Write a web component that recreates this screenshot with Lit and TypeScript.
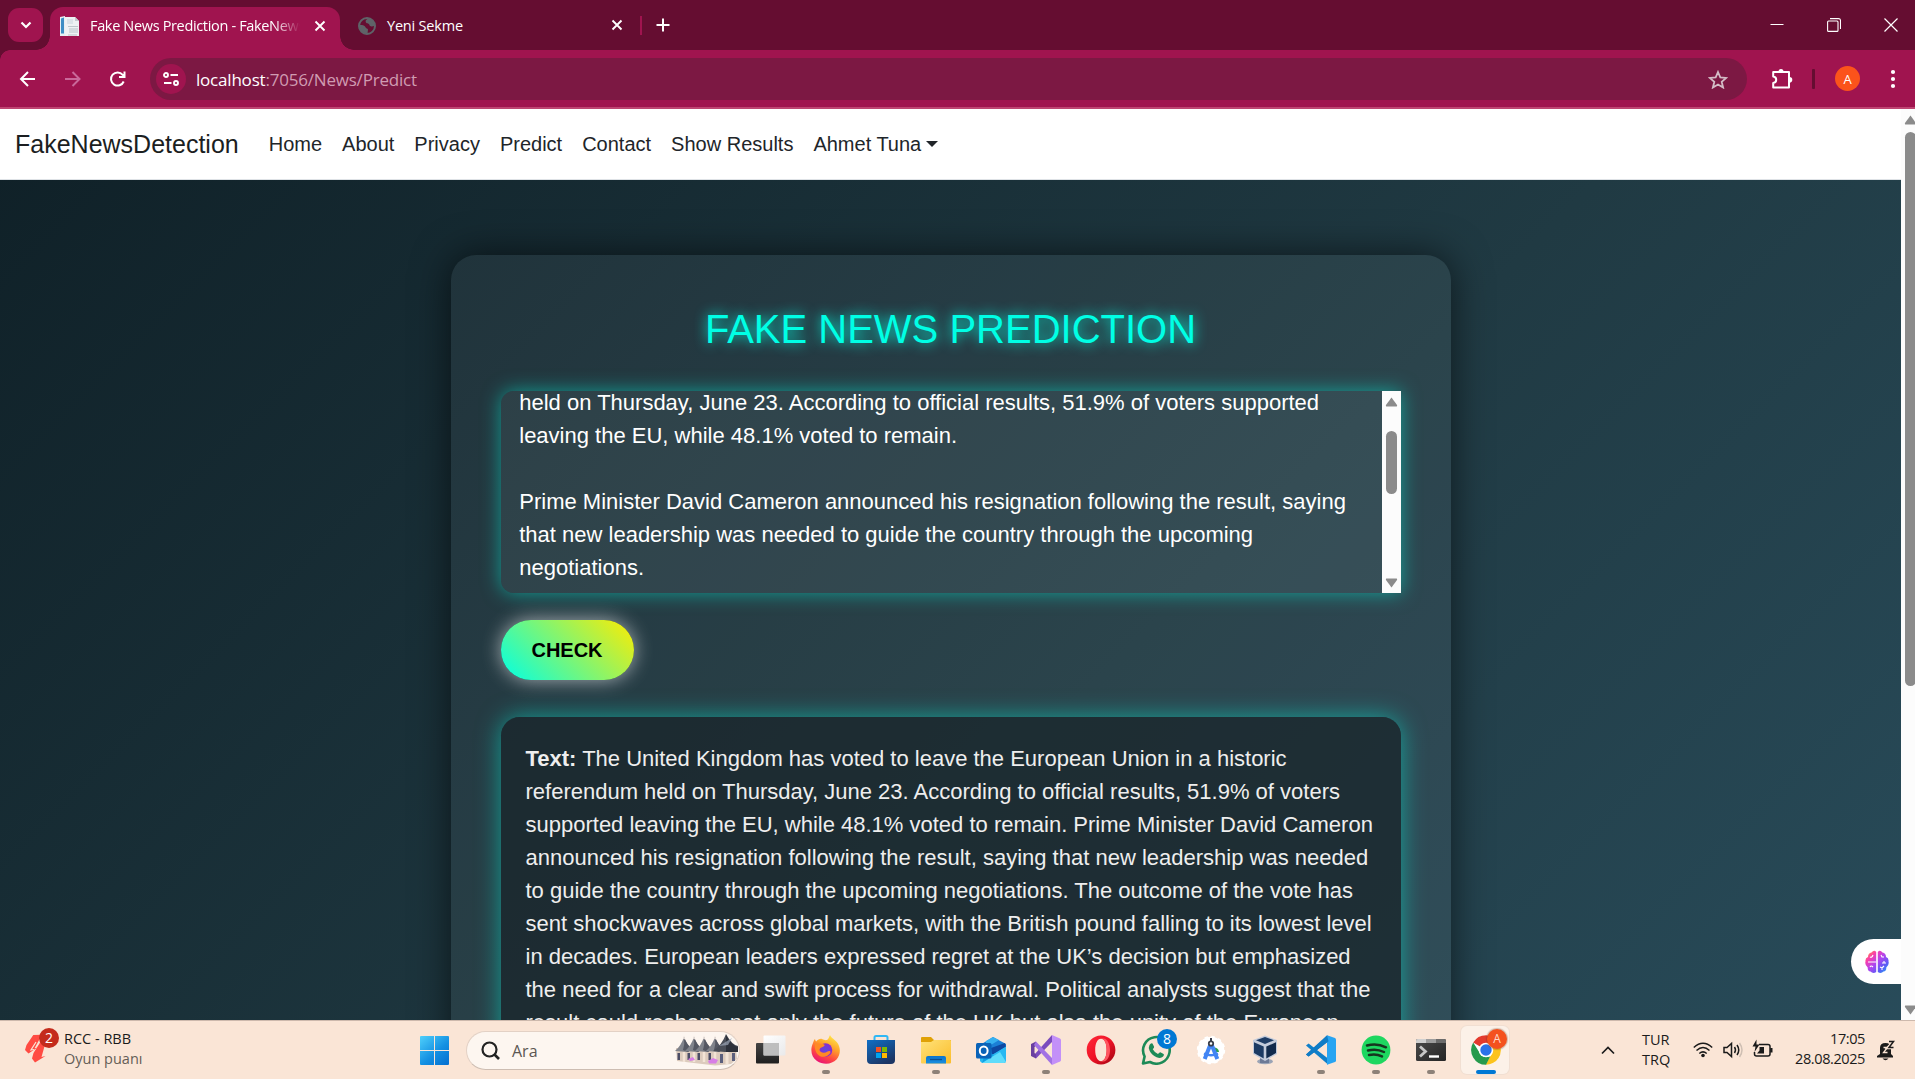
import { LitElement, html, css, svg, nothing } from "lit";
import { customElement, property } from "lit/decorators.js";

const icons: Record<string, unknown> = {
  taskview: svg`
    <defs>
      <linearGradient id="tvd" x1="0" y1="0" x2="0" y2="1"><stop offset="0" stop-color="#444"/><stop offset="1" stop-color="#1f1f1f"/></linearGradient>
      <linearGradient id="tvl" x1="0" y1="0" x2="1" y2="1"><stop offset="0" stop-color="#fff"/><stop offset="1" stop-color="#e9e9ea"/></linearGradient>
    </defs>
    <rect x="0" y="8" width="23" height="20.5" rx="1" fill="url(#tvd)"/>
    <rect x="7.500" y="0.500" width="22" height="20" rx="1" fill="url(#tvl)"/>
    <path d="M7.500 8H23V20.500H7.500z" fill="#b0b0b0" opacity=".8"/>`,
  firefox: svg`
    <defs>
      <linearGradient id="ffa" x1=".8" y1="0" x2=".3" y2="1"><stop offset="0" stop-color="#fff04a"/><stop offset=".4" stop-color="#ffa02a"/><stop offset=".7" stop-color="#ff4a40"/><stop offset="1" stop-color="#e8107a"/></linearGradient>
      <radialGradient id="ffb"><stop offset="0" stop-color="#5b4be0"/><stop offset="1" stop-color="#8a2bd0"/></radialGradient>
    </defs>
    <path d="M19 0c1 3 5 4.500 7.500 8 3.500 5 3 12-1 16.500C21 29.500 12 30 6 26 0 22-1 14 2 8c.5-1.500 1-3 2-4 .3 1 .5 2 1.200 2.600C7 4.500 9 3.500 11 4c2 .6 3 1.500 5 1 1.500-.8 2-3 3-5z" fill="url(#ffa)"/>
    <circle cx="14.500" cy="15" r="6.800" fill="url(#ffb)"/>
    <path d="M4 9c3-1 5 0 8 0 2 .2 2 1.800.5 2.600-2 1-4 1.400-4 3.400 1 3 5 3.500 8 1.500 1.500-1 3-.5 3 .7-1 3-5 5.300-9 4.500C6 20.500 3 15 4 9z" fill="#ff8a24"/>`,
  store: svg`
    <defs><linearGradient id="sta" x1="0" y1="0" x2=".6" y2="1"><stop offset="0" stop-color="#0f6fc6"/><stop offset="1" stop-color="#1c3564"/></linearGradient></defs>
    <path d="M8.500 6V2.500Q8.500 1 10 1h10q1.500 0 1.500 1.500V6" fill="none" stroke="#30b8f5" stroke-width="2"/>
    <path d="M1 5h28v20q0 4-4 4H5q-4 0-4-4z" fill="url(#sta)"/>
    <path d="M10 12h5v5h-5z" fill="#f25022"/><path d="M16 12h5v5h-5z" fill="#7fba00"/>
    <path d="M10 18h5v5h-5z" fill="#00a4ef"/><path d="M16 18h5v5h-5z" fill="#ffb900"/>`,
  folder: svg`
    <defs><linearGradient id="foa" x1="0" y1="0" x2="1" y2="1"><stop offset="0" stop-color="#ffe27a"/><stop offset="1" stop-color="#fbbd2b"/></linearGradient>
    <linearGradient id="fob" x1="0" y1="0" x2="0" y2="1"><stop offset="0" stop-color="#0b74cc"/><stop offset="1" stop-color="#1b8fe0"/></linearGradient></defs>
    <path d="M0 3q0-1 1-1h9l3 3h17v5H0z" fill="#e0a106"/>
    <path d="M0 7h10l3-2h16q1 0 1 1v21.500q0 1-1 1H1q-1 0-1-1z" fill="url(#foa)"/>
    <path d="M5 28.500V23q0-2 2-2h16q2 0 2 2v5.500z" fill="url(#fob)"/>
    <path d="M9 24.500h12" stroke="#0b4f92" stroke-width="1.300"/>`,
  outlook: svg`
    <path d="M4 10 17 2l13 7v3L17 20 4 14z" fill="#1b7fd6"/>
    <path d="M10 6 17 2l6 3-13 8z" fill="#36b0f0"/>
    <path d="M15 13 29 8l1 4-14 8z" fill="#0d47a1"/>
    <path d="M4 14 16 20 30 11.500V26q0 2-2 2H7q-2 0-3-2z" fill="#28b8f2"/>
    <path d="M6 28 24 17l6 10-2 1z" fill="#5fdcfb"/>
    <path d="M6 28 18 20l-8-4z" fill="#0fa0e4"/>
    <rect x="0" y="8" width="15.500" height="15.500" rx="1.500" fill="#0a63b8"/>
    <ellipse cx="7.700" cy="15.700" rx="3.900" ry="4.300" fill="none" stroke="#fff" stroke-width="2"/>`,
  vs: svg`
    <path d="M5 23.500 21 7V0L3 20z" fill="#7a4bbd"/>
    <path d="M0 9 5 6.500v4L3.500 12v6L5 19.500v4L0 21z" fill="#6a3fa0"/>
    <path d="M5 6.500 21 23V30L3 10z" fill="#a272e4"/>
    <path d="M21 0l8 3.500q1 .5 1 1.500v20q0 1-1 1.500L21 30z" fill="#c390f8"/>`,
  opera: svg`
    <defs><linearGradient id="opa" x1="0" y1="0" x2="1" y2="1"><stop offset="0" stop-color="#ff2a3a"/><stop offset=".5" stop-color="#ef1226"/><stop offset="1" stop-color="#9c0411"/></linearGradient></defs>
    <path fill-rule="evenodd" d="M15 .5C7 .5.700 7 .700 15S7 29.500 15 29.500 29.400 23 29.400 15 23 .5 15 .5zM15 3.800c3.600 0 5.600 4.800 5.600 11.200S18.600 26.200 15 26.200 9.200 21.400 9.200 15 11.400 3.800 15 3.800z" fill="url(#opa)"/>
    <path d="M15 3.800c3.600 0 5.600 4.800 5.600 11.200S18.600 26.200 15 26.200c6 2 9-5 9-11.200S21 1.800 15 3.800z" fill="#ff5560"/>`,
  whatsapp: svg`
    <path d="M2 28.500 3.600 21.500A13.300 13.300 0 1 1 9 27z" fill="none" stroke="#1d8a57" stroke-width="2.600" stroke-linejoin="round"/>
    <path d="M8.500 10q1.500-2.500 3-1.500l1.600 3.200q.3.700-1.300 2.500 1.800 3.300 5.200 4.800 1.600-2 2.300-1.800l3.300 1.700q1 .8-.5 2.700-2.500 2.400-6.500.6-5-2.500-7-6.500-1.500-3.200-.1-5.700z" fill="#1d8a57"/>`,
  android: svg`
    <circle cx="15" cy="15" r="13.300" fill="#fff"/><circle cx="15" cy="15" r="13.300" fill="none" stroke="#fff" stroke-width="1.800" stroke-dasharray="3.500 3.460"/>
    <path d="M18 12.500q4.500 0 5 4.500h-5z" fill="#2f9e50"/>
    <path d="M15 8 8.700 24M15 8l6.300 16" stroke="#4285f4" stroke-width="4" fill="none"/>
    <path d="M8 18.500q7 3.500 14 0" stroke="#4285f4" stroke-width="2.400" fill="none"/>
    <circle cx="15" cy="8.500" r="2.200" fill="#fff" stroke="#3a3f4b" stroke-width="1.800"/><path d="M15 3v3" stroke="#3a3f4b" stroke-width="2"/>`,
  vbox: svg`
    <ellipse cx="14" cy="26.500" rx="8" ry="2.800" fill="#9aa3b5"/>
    <path d="M9 22h9v6H9z" fill="#6d7a96"/>
    <path d="M2 5 14 .500 26 5V19L14 26 2 19z" fill="#c3cbdb"/>
    <path d="M5 5.300 14 2l9 3.300L14 9z" fill="#1f3d66"/>
    <path d="M3 7.300 12.700 11.500V23.500L3 18z" fill="#1c3a63"/>
    <path d="M25 7.300 15.300 11.500V23.500L25 18z" fill="#122a4c"/>`,
  vscode: svg`
    <path d="M0 10.500 2.600 8.500 22 23.500V29.500z" fill="#0f7fc9"/>
    <path d="M0 19.500 2.600 21.500 22 6.500V.500z" fill="#0a6ab8"/>
    <path d="M21 .3 29 3q1 .5 1 1.500v21q0 1-1 1.500l-8 2.700z" fill="#27a4f2"/>
    <path d="M0 19.500 21 .3l1.500 6L2.600 21.500z" fill="#0f7cc6"/>`,
  spotify: svg`
    <circle cx="15" cy="15" r="14.400" fill="#1ed760"/>
    <path d="M6 10.500q10-2.800 19 1.800M7 15.500q8.500-2.300 16 1.500M8 20q7-1.700 13 1.400" stroke="#16351f" fill="none" stroke-linecap="round" stroke-width="2.500"/>`,
  terminal: svg`
    <defs><linearGradient id="tea" x1="0" y1="0" x2="1" y2="1"><stop offset="0" stop-color="#4a4a4a"/><stop offset="1" stop-color="#252525"/></linearGradient></defs>
    <rect x="0" y="4" width="30" height="22" rx="1.500" fill="url(#tea)"/>
    <path d="M0 8V5.500Q0 4 1.500 4H10v4z" fill="#d0d0d0"/><path d="M10 4h10v4H10z" fill="#9d9d9d"/><path d="M20 4h8.500Q30 4 30 5.500V8H20z" fill="#6b6b6b"/>
    <path d="M4 11.500l5.500 5-5.500 5" stroke="#c7c7c7" stroke-width="2.800" fill="none"/><path d="M13 21.500h10" stroke="#fff" stroke-width="2.400"/>`,
  chrome: svg`
    <circle cx="15" cy="15" r="14.800" fill="#fff"/>
    <path d="M15 15 2.180 7.600A14.800 14.800 0 0 1 27.820 7.600z" fill="#e33b2e"/>
    <path d="M15 8.200H28.200A14.800 14.800 0 0 1 14.500 29.800L20.900 18.400z" fill="#fcc31e"/>
    <path d="M15 29.800A14.800 14.800 0 0 1 2.180 7.600L9.100 18.400Q11 21.800 15 21.800l4.200-.4z" fill="#269a4c"/>
    <circle cx="15" cy="15" r="7.300" fill="#fff"/><circle cx="15" cy="15" r="5.700" fill="#2a72e8"/>`,
};

const apps: { icon: string; run?: boolean; active?: boolean; badge?: string }[] = [
  { icon: "taskview" },
  { icon: "firefox", run: true },
  { icon: "store" },
  { icon: "folder", run: true },
  { icon: "outlook" },
  { icon: "vs", run: true },
  { icon: "opera" },
  { icon: "whatsapp", badge: "8" },
  { icon: "android" },
  { icon: "vbox" },
  { icon: "vscode", run: true },
  { icon: "spotify", run: true },
  { icon: "terminal", run: true },
  { icon: "chrome", active: true, badge: "A" },
];

@customElement("browser-chrome")
export class BrowserChrome extends LitElement {
  static styles = css`
    :host { display: block; height: 109px; background: #a0144f; box-sizing: border-box; border-bottom: 2px solid #be4572; font-family: "Open Sans", "Noto Sans", sans-serif; color: #fff; }
    .strip { display: flex; height: 50px; background: #650d31; align-items: center; padding-left: 8px; box-sizing: border-box; }
    .menu { width: 35px; height: 34px; border-radius: 11px; background: #a0144f; display: grid; place-items: center; margin-right: 7px; }
    .tab { display: flex; align-items: center; height: 43px; align-self: flex-end; font-size: 14.500px; white-space: nowrap; box-sizing: border-box; }
    .active { position: relative; width: 290px; background: #a0144f; border-radius: 13px 13px 0 0; padding: 0 12px 6px 10px; }
    .active::before, .active::after { content: ""; position: absolute; bottom: 0; width: 14px; height: 14px; }
    .active::before { left: -14px; background: radial-gradient(circle at 0 0, transparent 13.500px, #a0144f 14px); }
    .active::after { right: -14px; background: radial-gradient(circle at 100% 0, transparent 13.500px, #a0144f 14px); }
    .label { margin-left: 10px; letter-spacing: -0.340px; }
    .fade { width: 210px; overflow: hidden; -webkit-mask-image: linear-gradient(90deg, #000 184px, transparent 210px); }
    .idle { width: 254px; padding: 0 0 6px 17px; }
    .idle .label { letter-spacing: -0.200px; }
    .close { margin-left: 14px; }
    .shut { margin-left: 17px; }
    .sep { width: 2px; height: 19px; background: #a0144f; margin: 0 14px 0 17px; }
    .win { margin-left: auto; display: flex; align-items: center; gap: 43px; padding-right: 17px; }
    .bar { position: relative; display: flex; align-items: center; height: 57px; box-sizing: border-box; padding: 0 19px; }
    .bar::before { content: ""; position: absolute; left: 0; top: 0; width: 10px; height: 10px; background: radial-gradient(circle at 100% 100%, transparent 9.500px, #650d31 10px); }
    .nav { display: flex; gap: 27px; width: 131px; flex: none; }
    .omni { flex: none; width: 1597px; height: 42px; margin-top: 1px; border-radius: 21px; background: #7c1843; display: flex; align-items: center; padding: 0 19px 0 6px; box-sizing: border-box; }
    .chip { width: 30px; height: 30px; border-radius: 50%; background: #a0144f; display: grid; place-items: center; }
    .url { flex: 1; margin-left: 10px; font-size: 17px; letter-spacing: -0.200px; color: #d09cb2; }
    .url b { font-weight: 400; color: #fff; }
    .right { flex: 1; display: flex; align-items: center; }
    .puzzle { margin-left: 24px; }
    .vr { width: 3px; height: 20px; border-radius: 1px; background: #650d31; margin-left: 18px; }
    .avatar { width: 25px; height: 25px; border-radius: 50%; background: #fb531b; margin-left: 20px; font-size: 13px; display: grid; place-items: center; }
    .dots { margin-left: 30px; }
    svg { display: block; flex: none; }
  `;
  render() {
    const cross = svg`<path d="M1.500 1.500l9 9M10.500 1.500l-9 9"/>`;
    return html`
      <div class="strip">
        <div class="menu"><svg width="12" height="8" viewBox="0 0 12 8" fill="none" stroke="#fff" stroke-width="2.200"><path d="M1.500 1.500 6 6l4.500-4.500"/></svg></div>
        <div class="tab active">
          <svg width="20" height="20" viewBox="0 0 20 20"><path d="M0 1l5-1v20H0z" fill="#e6eef2"/><path d="M1 2.500l3-1v16H1z" fill="#3d8dc4"/><path d="M5 1h10l4 4v15H5z" fill="#eef1f3"/><path d="M7 3h6v5H7z" fill="#dbe3e8"/><path d="M15 1l4 4h-4z" fill="#c3cbd0"/><path d="M9 12h9v5H9z" fill="#d3dade"/><path d="M8 10.500h10M8 19h9" stroke="#bcc5ca"/></svg>
          <span class="label fade">Fake News Prediction - FakeNews</span>
          <svg class="close" width="12" height="12" viewBox="0 0 12 12" stroke="#fff" stroke-width="1.900">${cross}</svg>
        </div>
        <div class="tab idle">
          <svg width="20" height="20" viewBox="0 0 20 20"><circle cx="10" cy="10" r="8" fill="none" stroke="#5f6368" stroke-width="2"/><path d="M3 9c3 0 5 .5 5.500 2.200s2 .8 2.500 2.300L10.500 18C5 18 2 14 2 9zM11.500 2.500C9 3 8 5 9 6.500s3 .5 3.500 2.500 3 1.500 5.500.5C17.500 5 15 3 11.500 2.500z" fill="#5f6368"/></svg>
          <span class="label">Yeni Sekme</span>
        </div>
        <svg class="shut" width="12" height="12" viewBox="0 0 12 12" stroke="#fff" stroke-width="1.900">${cross}</svg>
        <div class="sep"></div>
        <svg width="14" height="14" viewBox="0 0 14 14" stroke="#fff" stroke-width="2"><path d="M7 .5v13M.5 7h13"/></svg>
        <div class="win">
          <svg width="14" height="14" viewBox="0 0 14 14" stroke="#fff"><path d="M.500 6.500h13"/></svg>
          <svg width="14" height="14" viewBox="0 0 14 14" fill="none" stroke="#fff" stroke-width="1.100"><rect x=".6" y="3" width="10.400" height="10.400" rx="1"/><path d="M3 .6h8.500q2 0 2 2v8.400"/></svg>
          <svg width="14" height="14" viewBox="0 0 14 14" stroke="#fff" stroke-width="1.200"><path d="M.5.5l13 13M13.500.5l-13 13"/></svg>
        </div>
      </div>
      <div class="bar">
        <div class="nav">
          <svg width="18" height="18" viewBox="0 0 18 18" fill="none" stroke="#fff" stroke-width="2"><path d="M16 9H2.500M9 2 2 9l7 7"/></svg>
          <svg width="18" height="18" viewBox="0 0 18 18" fill="none" stroke="#c9699a" stroke-width="2"><path d="M1 9h14M8.500 2l7 7-7 7"/></svg>
          <svg width="18" height="18" viewBox="0 0 18 18" fill="none" stroke="#fff" stroke-width="2"><path d="M14.700 11.500A6.600 6.600 0 1 1 13.700 4.800L15.500 6.500M15.500 1.500v5.500h-5.500"/></svg>
        </div>
        <div class="omni">
          <div class="chip"><svg width="16" height="14" viewBox="0 0 16 14" fill="none" stroke="#fff" stroke-width="1.900"><circle cx="3" cy="3" r="2"/><path d="M7.500 3H15M1 11h7.500"/><circle cx="13" cy="11" r="2"/></svg></div>
          <div class="url"><b>localhost</b>:7056/News/Predict</div>
          <svg width="20" height="19" viewBox="0 0 20 19" fill="none" stroke="#d3bcc6" stroke-width="1.800"><path d="M10 2l2.300 5.400 5.900.5-4.500 3.900 1.400 5.700L10 14.500l-5.100 3 1.400-5.700L1.800 7.900l5.900-.5z"/></svg>
        </div>
        <div class="right">
          <svg class="puzzle" width="23" height="22" viewBox="0 0 23 22"><path d="M3 4h15v15.500H2.200v-4.500c4-.4 4-6.100 0-6.500V4z" fill="none" stroke="#fff" stroke-width="2" stroke-linejoin="round"/><path d="M7.500 3.500a2.500 2.500 0 0 1 5 0zM18.500 9a2.800 2.800 0 0 1 0 5.600z" fill="#fff"/></svg>
          <div class="vr"></div>
          <div class="avatar">A</div>
          <svg class="dots" width="6" height="20" viewBox="0 0 6 20" fill="#fff"><circle cx="3" cy="3" r="2.100"/><circle cx="3" cy="10" r="2.100"/><circle cx="3" cy="17" r="2.100"/></svg>
        </div>
      </div>`;
  }
}

@customElement("scroll-track")
export class ScrollTrack extends LitElement {
  @property({ type: Number }) before = 0;
  @property({ type: Number }) thumb = 0;
  static styles = css`
    :host { display: flex; flex-direction: column; width: 19px; align-items: center; background: #fcfcfc; box-sizing: border-box; padding: 6px 0 5px; flex: none; }
    .thumb { width: 11px; border-radius: 6px; background: #8b8b8b; flex: none; }
    .end { margin-top: auto; }
    svg { display: block; flex: none; }
  `;
  render() {
    return html`
      <svg width="13" height="10" viewBox="0 0 13 10"><path d="M6.500.500 12.200 8.300 11.800 9.500H1.200L.8 8.300z" fill="#8b8b8b"/></svg>
      <div class="thumb" style="margin-top:${this.before}px;height:${this.thumb}px"></div>
      <svg class="end" width="13" height="10" viewBox="0 0 13 10"><path d="M6.500 9.500 12.200 1.700 11.800.500H1.200L.8 1.700z" fill="#8b8b8b"/></svg>`;
  }
}

@customElement("news-page")
export class NewsPage extends LitElement {
  static styles = css`
    :host { display: flex; height: 911px; overflow: hidden; position: relative; font-family: "Liberation Sans", Arial, sans-serif; }
    .view { width: 1901px; flex: none; height: 911px; overflow: hidden; }
    .body { height: 1441px; background: linear-gradient(135deg, #0f2027, #203a43, #2c5364); overflow: hidden; }
    nav { height: 71px; box-sizing: border-box; background: #fff; border-bottom: 1px solid #dee2e6; display: flex; align-items: center; padding-left: 15px; color: #212529; font-size: 20px; gap: 20px; }
    .brand { font-size: 25px; margin-right: 10px; color: #1b1e21; line-height: 30px; }
    .drop { display: flex; align-items: center; gap: 5px; }
    .caret { border: 6px solid transparent; border-top-color: #212529; border-bottom: 0; }
    .card { width: 1000px; box-sizing: border-box; margin: 75px auto 0; padding: 50px; border-radius: 25px; background: rgba(255,255,255,.05); box-shadow: 0 0 38px rgba(0,0,0,.6); height: 1150px; }
    h1 { margin: 0 0 38px; font-size: 40px; line-height: 48px; font-weight: 400; text-align: center; color: #00ffe5; text-shadow: 0 0 12.500px #00ffe5; }
    .area { height: 202px; display: flex; justify-content: space-between; overflow: hidden; border-radius: 12.500px 0 0 12.500px; background: rgba(255,255,255,.05); box-shadow: 0 0 19px rgba(0,255,229,.5); color: #fff; font-size: 22px; line-height: 33px; }
    .typed { margin: -5px 0 0 18.750px; white-space: pre; }
    button { display: block; margin: 27px 0 37px; width: 133px; height: 60px; border: 0; border-radius: 30px; padding: 0; font: 700 20px "Liberation Sans", Arial, sans-serif; color: #000; background: linear-gradient(45deg, #00ffe5, #ffeb00); box-shadow: 0 0 19px rgba(255,255,255,.6); }
    .result { padding: 25px; height: 420px; border-radius: 18.750px; box-shadow: 0 0 25px rgba(0,255,229,.5); background: rgba(25,38,43,.75); color: #eee; font-size: 22px; line-height: 33px; white-space: pre; }
    .fab { position: absolute; left: 1851px; top: 830px; width: 50px; height: 45px; box-sizing: border-box; background: #fff; border-radius: 23px 0 0 23px; display: flex; align-items: center; padding-left: 14px; }
  `;
  render() {
    const links = ["Home", "About", "Privacy", "Predict", "Contact", "Show Results"];
    const typed = [
      "held on Thursday, June 23. According to official results, 51.9% of voters supported",
      "leaving the EU, while 48.1% voted to remain.",
      "",
      "Prime Minister David Cameron announced his resignation following the result, saying",
      "that new leadership was needed to guide the country through the upcoming",
      "negotiations.",
    ].join("\n");
    const body = [
      " The United Kingdom has voted to leave the European Union in a historic",
      "referendum held on Thursday, June 23. According to official results, 51.9% of voters",
      "supported leaving the EU, while 48.1% voted to remain. Prime Minister David Cameron",
      "announced his resignation following the result, saying that new leadership was needed",
      "to guide the country through the upcoming negotiations. The outcome of the vote has",
      "sent shockwaves across global markets, with the British pound falling to its lowest level",
      "in decades. European leaders expressed regret at the UK\u2019s decision but emphasized",
      "the need for a clear and swift process for withdrawal. Political analysts suggest that the",
      "result could reshape not only the future of the UK but also the unity of the European",
    ].join("\n");
    return html`
      <div class="view"><div class="body">
        <nav><span class="brand">FakeNewsDetection</span>${links.map((l) => html`<span>${l}</span>`)}<span class="drop">Ahmet Tuna<i class="caret"></i></span></nav>
        <div class="card">
          <h1>FAKE NEWS PREDICTION</h1>
          <div class="area"><div class="typed">${typed}</div><scroll-track .before=${24} .thumb=${63}></scroll-track></div>
          <button>CHECK</button>
          <div class="result"><b>Text:</b>${body}</div>
        </div>
      </div></div>
      <scroll-track .before=${7} .thumb=${554}></scroll-track>
      <div class="fab"><svg width="24" height="24" viewBox="0 0 24 24">
        <defs><linearGradient id="br" x1="0" y1="0" x2="1" y2="1"><stop offset="0" stop-color="#ffb01e"/><stop offset=".25" stop-color="#fb3fa8"/><stop offset=".5" stop-color="#b044f0"/><stop offset=".75" stop-color="#5a5cf5"/><stop offset="1" stop-color="#19b6f5"/></linearGradient></defs>
        <path d="M11.200 2v20Q8 24 5.500 21.500 2.500 21 2.700 17.500-.5 15 .5 11.500 0 8 3 7 3 3 6.500 2.500 9-.5 11.200 2zM12.800 2v20q3.200 2 5.700-.5 3-.5 2.800-4 3.200-2.500 2.200-6 .5-3.500-2.500-4.500 0-4-3.500-4.500Q15-.5 12.800 2z" fill="url(#br)"/>
        <path d="M5 7q2 1 3-2M3 12h8M5 17q1-2 3 0M16 5l1 2 2 0M17 13h4M19 13v-2M15 17l2 1 2-2M17 18v2" stroke="#fff" stroke-width="1.100" fill="none"/>
      </svg></div>`;
  }
}

@customElement("task-bar")
export class TaskBar extends LitElement {
  static styles = css`
    :host { display: flex; align-items: flex-start; height: 59px; box-sizing: border-box; border-top: 1px solid #cdb9ad; background: #fae5d6; font-family: "Open Sans", "Noto Sans", sans-serif; font-size: 14.500px; line-height: 20px; color: #1b1b1b; overflow: hidden; }
    svg { display: block; flex: none; }
    .widget { display: flex; width: 420px; flex: none; padding: 8px 0 0 24px; box-sizing: border-box; }
    .logo { position: relative; width: 40px; height: 40px; }
    .logo svg { margin-top: 4px; }
    .badge { position: absolute; width: 20px; height: 20px; border-radius: 50%; color: #fff; display: grid; place-items: center; line-height: 20px; font-size: 14px; }
    .two { background: #c42b1c; left: 15px; top: -1px; }
    .sub { color: #655d57; }
    .start { margin-top: 15px; }
    .search { width: 274px; flex: none; height: 39px; box-sizing: border-box; border: 1px solid #e3d1c5; border-bottom-color: #cdbdb2; border-radius: 20px; background: #fdf6f0; margin: 10px 3px 0 17px; display: flex; align-items: center; padding: 0 1px 0 14px; overflow: hidden; color: #5c5753; font-size: 16px; }
    .search span { flex: 1; margin-left: 12px; }
    .app { position: relative; width: 55px; height: 58px; flex: none; display: flex; flex-direction: column; align-items: center; padding-top: 14px; box-sizing: border-box; }
    .app svg { position: relative; }
    .hot::before { content: ""; position: absolute; left: 3px; top: 5px; width: 48px; height: 48px; border-radius: 6px; background: #fcf1e8; box-shadow: 0 0 0 1px #f1dfd2; }
    .dot { position: relative; width: 8px; height: 4px; border-radius: 2px; background: #8d8178; margin-top: 5px; }
    .hot .dot { width: 20px; background: #0078d4; }
    .n8 { background: #0078d4; left: 29px; top: 8px; }
    .nA { background: #f4511e; left: 29px; top: 8px; font-size: 12px; color: #ffd9c9; box-shadow: 0 0 1px 1px rgba(120,60,30,.3); }
    .tray { display: flex; flex: 1; padding-left: 88px; }
    .lang { margin: 9px 0 0 27px; width: 29px; white-space: nowrap; }
    .ic { margin-top: 19px; }
    .clock { width: 92px; flex: none; margin-top: 8px; text-align: right; letter-spacing: -0.400px; }
  `;
  render() {
    return html`
      <div class="widget">
        <div class="logo">
          <svg width="26" height="30" viewBox="0 0 26 30"><path d="M9.300 2 18 1.700 10.500 15.200 13 14.700 4.500 20.500 1 17 2.500 12z" fill="#ff4b42"/><path d="M22 8 17.500 24l4-1L11 29.500 8 25.500 9.500 20 17 8z" fill="#ff4b42"/><path d="M12 9 7 17l3-.5" stroke="#fae5d6" stroke-width="1.200" fill="none"/></svg>
          <span class="badge two">2</span>
        </div>
        <div><div>RCC - RBB</div><div class="sub">Oyun puanı</div></div>
      </div>
      <svg class="start" width="29" height="29" viewBox="0 0 29 29"><defs><linearGradient id="w" gradientUnits="userSpaceOnUse" x1="0" y1="0" x2="25" y2="29"><stop offset="0" stop-color="#4fd0fb"/><stop offset=".6" stop-color="#1490e2"/><stop offset="1" stop-color="#0673d2"/></linearGradient></defs><path d="M1 0h13v14H0V1q0-1 1-1zM15 0h13q1 0 1 1v13H15zM0 15h14v14H1q-1 0-1-1zM15 15h14v13q0 1-1 1H15z" fill="url(#w)"/></svg>
      <div class="search">
        <svg width="19" height="19" viewBox="0 0 19 19" fill="none" stroke="#232323" stroke-width="2.200"><circle cx="8.500" cy="8.500" r="7"/><path d="M13.500 13.500l4.500 4.500" stroke-width="2.600"/></svg>
        <span>Ara</span>
        <svg width="63" height="33" viewBox="0 0 63 33">
          <path d="M1 14h60l1 11-6 5-16 1.500L2 27z" fill="#dccbbd"/>
          ${[0, 10, 20, 31].map((x) => svg`<path d="M${x} 17Q${x + 6} 12 ${x + 9} 3Q${x + 12} 11 ${x + 17} 15L${x + 13} 18z" fill="#80838b"/><path d="M${x + 9} 3Q${x + 12} 11 ${x + 17} 15l-4 3-5-2Q${x + 10} 10 ${x + 9} 3z" fill="#545762"/><path d="M${x + 8} 5l1-3.500L${x + 10.300} 5.500z" fill="#e8dfd8"/><path d="M${x + 2.500} 19h2.500v7H${x + 2.500}z" fill="#4c4d66"/><path d="M${x + 9} 18v10" stroke="#f3e4d6" stroke-width="2.500"/>`)}
          <path d="M38 17Q47 11 51 0q6 11 12 12v6l-13 0z" fill="#4a4e58"/><path d="M51 1q5 10 12 12v5l-12 0z" fill="#2d313b"/><path d="M44 12l13-8-4 7z" fill="#9da7b8" opacity=".7"/>
          <path d="M45 20h3v9h-3zM57 19h3v8h-3z" fill="#5b5f7c"/><path d="M52 18v12" stroke="#f3e4d6" stroke-width="3"/>
          <path d="M13 25l5-2 2 3-5 1zM33 27l5-3 5 2-2 3.500h-7z" fill="#d77ee6"/>
        </svg>
      </div>
      ${apps.map((a) => html`<div class="app ${a.active ? "hot" : ""}">
        <svg width="30" height="30" viewBox="0 0 30 30">${icons[a.icon]}</svg>
        ${a.badge ? html`<span class="badge n${a.badge}">${a.badge}</span>` : nothing}
        ${a.run || a.active ? html`<i class="dot"></i>` : nothing}
      </div>`)}
      <div class="tray">
        <svg class="ic" width="14" height="20" viewBox="0 0 14 20" fill="none" stroke="#1b1b1b" stroke-width="1.700"><path d="M1 13.500l6-6 6 6"/></svg>
        <div class="lang"><div>TUR</div><div>TRQ</div></div>
        <svg class="ic" width="102" height="20" viewBox="-22 0 102 20" fill="none" stroke="#1b1b1b" stroke-width="1.500" overflow="visible">
          <path d="M.8 7.500q9.200-8.500 18.400 0M3.500 10.500q6.500-6 13 0M6.300 13.500q3.700-3.300 7.400 0"/><circle cx="10" cy="15.500" r="1.800" fill="#1b1b1b" stroke="none"/>
          <path d="M31 7.500h3l4.500-4v13l-4.500-4h-3z"/><path d="M41.500 7q2 3 0 6M44 5q3.500 5 0 10"/><path d="M46.500 3q5 7 0 14" stroke="#cfbfb3"/>
          <path d="M66 4.500h9q2 0 2 2v7.500q0 2-2 2H63.500q-2 0-2-2V12"/><path d="M66.500 7h4.500v6.500h-7l2.500-3z" fill="#1b1b1b" stroke="none"/><path d="M78.300 8v4.500" stroke-width="2.400"/><path d="M63.500-.5l-4 7h3l-1 5.500 5-7.500h-3z" fill="#1b1b1b" stroke="none"/>
        </svg>
        <div class="clock"><div>17:05</div><div>28.08.2025</div></div>
        <svg width="30" height="42" viewBox="-12 -19 30 42"><path d="M3 14V8Q3 3 8.500 3T14 8v6l2 2v1.500H0V16zM5.500 18.500h6Q8.500 22 5.500 18.500z" fill="#1b1b1b"/><path d="M6.500 7.500h4l-4 5h4" fill="none" stroke="#fae5d6" stroke-width="1.300"/><path d="M11.500 1.500h5.500l-5.500 6H17" fill="none" stroke="#fae5d6" stroke-width="3.500"/><path d="M12 1.500h4.500l-4.500 6h4.500" fill="none" stroke="#1b1b1b" stroke-width="1.500"/></svg>
      </div>`;
  }
}

@customElement("app-root")
export class AppRoot extends LitElement {
  static styles = css`
    :host { display: flex; flex-direction: column; width: 1915px; height: 1079px; overflow: hidden; }
  `;
  render() {
    return html`<browser-chrome></browser-chrome><news-page></news-page><task-bar></task-bar>`;
  }
}
